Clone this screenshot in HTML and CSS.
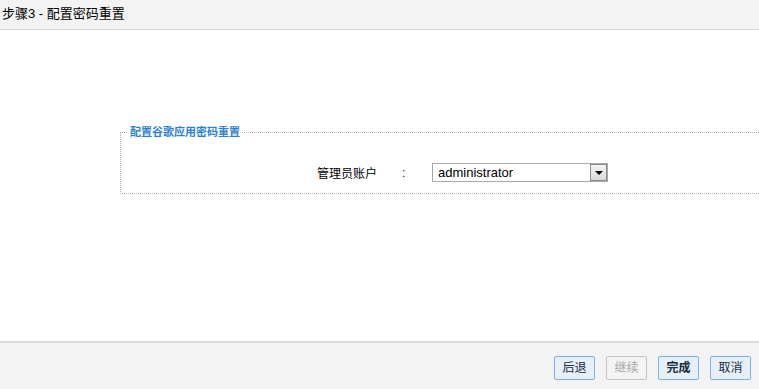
FILE: index.html
```html
<!DOCTYPE html>
<html>

<head>
    <meta charset="utf-8">
    <title>步骤3 - 配置密码重置</title>
    <link rel="stylesheet" href="styles.css">
</head>

<body>
    <div class="page">
        <div class="header">步骤3 - 配置密码重置</div>

        <div class="main">
            <fieldset class="group">
                <legend>配置谷歌应用密码重置</legend>
                <div class="row">
                    <span class="label">管理员账户</span>
                    <span class="colon">:</span>
                    <div class="select">
                        <span class="value">administrator</span>
                        <span class="arrow"><span class="tri"></span></span>
                    </div>
                </div>
            </fieldset>
        </div>

        <div class="footer">
            <a class="btn">后退</a>
            <a class="btn disabled">继续</a>
            <a class="btn strong">完成</a>
            <a class="btn">取消</a>
        </div>
    </div>
</body>

</html>
```

FILE: styles.css
```css
html, body {
    margin: 0;
    padding: 0;
}

body {
    font-family: "Liberation Sans", "Noto Sans CJK SC", sans-serif;
    color: #000;
    background: #fff;
    overflow: hidden;
}

.page {
    display: flex;
    flex-direction: column;
    height: 389px;
}

.header {
    height: 29px;
    line-height: 27px;
    padding-left: 2px;
    font-size: 13px;
    background: #f3f3f3;
    border-bottom: 1px solid #dcdcdc;
}

.main {
    flex: 1;
    overflow: hidden;
    padding-top: 95px;
}

.group {
    margin: 0 -40px 0 120px;
    padding: 0 0 11px 7px;
    border: 1px dotted #b4b4b4;
    min-width: 0;
}

.group legend {
    padding: 0 2px;
    font-size: 11px;
    font-weight: bold;
    line-height: 14px;
    color: #2f7fd0;
}

.row {
    display: flex;
    align-items: center;
    margin-top: 24px;
    height: 19px;
    padding-left: 189px;
    font-size: 12px;
}

.label {
    width: 85px;
}

.colon {
    width: 30px;
}

.select {
    display: flex;
    align-items: center;
    justify-content: space-between;
    box-sizing: border-box;
    width: 176px;
    height: 19px;
    border: 1px solid #a9a9a9;
    background: #fff;
}

.select .value {
    padding-left: 5px;
    font-size: 13px;
}

.select .arrow {
    display: flex;
    align-items: center;
    justify-content: center;
    box-sizing: border-box;
    width: 17px;
    height: 17px;
    border: 1px solid #8a8a8a;
    background: linear-gradient(#f4f4f4, #d9d9d9);
}

.select .tri {
    width: 0;
    height: 0;
    border-left: 4px solid transparent;
    border-right: 4px solid transparent;
    border-top: 4px solid #000;
    margin-top: 1px;
}

.footer {
    height: 46px;
    background: #f3f3f3;
    border-top: 2px solid #dcdcdc;
    display: flex;
    justify-content: flex-end;
    align-items: center;
    gap: 11px;
    padding: 3px 8px 0 0;
    box-sizing: border-box;
    height: 48px;
}

.btn {
    box-sizing: border-box;
    width: 41px;
    height: 24px;
    line-height: 22px;
    text-align: center;
    font-size: 12px;
    color: #1a2a40;
    background: #e5f0fb;
    border: 1px solid #7fb2e5;
    border-radius: 2px;
}

.btn.strong {
    font-weight: bold;
}

.btn.disabled {
    color: #a8a8a8;
    background: #f4f4f4;
    border-color: #c2c2c2;
}
```
